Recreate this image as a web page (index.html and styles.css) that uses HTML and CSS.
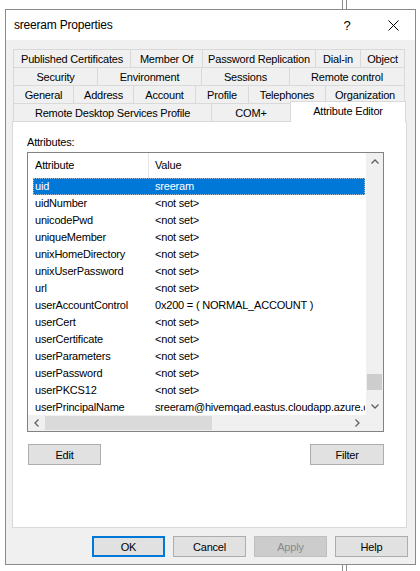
FILE: index.html
```html
<!DOCTYPE html>
<html>
<head>
<meta charset="utf-8">
<title>sreeram Properties</title>
<link rel="stylesheet" href="styles.css">
</head>
<body>
<div class="bgline bgline-top"></div>
<div class="window">
  <div class="titlebar">
    <span class="title">sreeram Properties</span>
    <span class="helpq">?</span>
    <svg class="close" width="11" height="11" viewBox="0 0 11 11"><path d="M0.5 0.5 L10.5 10.5 M10.5 0.5 L0.5 10.5" stroke="#000" stroke-width="1" fill="none"/></svg>
  </div>
  <div class="body">
    <div class="tabs">
      <div class="tabrow r1">
        <div class="tab">Published Certificates</div>
        <div class="tab">Member Of</div>
        <div class="tab">Password Replication</div>
        <div class="tab">Dial-in</div>
        <div class="tab last">Object</div>
      </div>
      <div class="tabrow r2">
        <div class="tab">Security</div>
        <div class="tab">Environment</div>
        <div class="tab">Sessions</div>
        <div class="tab last">Remote control</div>
      </div>
      <div class="tabrow r3">
        <div class="tab">General</div>
        <div class="tab">Address</div>
        <div class="tab">Account</div>
        <div class="tab">Profile</div>
        <div class="tab">Telephones</div>
        <div class="tab last">Organization</div>
      </div>
      <div class="tabrow r4">
        <div class="tab">Remote Desktop Services Profile</div>
        <div class="tab">COM+</div>
        <div class="tab last selected">Attribute Editor</div>
      </div>
    </div>
    <div class="panel">
      <div class="label">Attributes:</div>
      <div class="listbox">
        <div class="listarea">
          <div class="lheader">
            <div class="hcell">Attribute</div>
            <div class="hcell hvalue">Value</div>
          </div>
          <div class="lrow sel"><span class="c1">uid</span><span class="c2">sreeram</span></div>
          <div class="lrow"><span class="c1">uidNumber</span><span class="c2">&lt;not set&gt;</span></div>
          <div class="lrow"><span class="c1">unicodePwd</span><span class="c2">&lt;not set&gt;</span></div>
          <div class="lrow"><span class="c1">uniqueMember</span><span class="c2">&lt;not set&gt;</span></div>
          <div class="lrow"><span class="c1">unixHomeDirectory</span><span class="c2">&lt;not set&gt;</span></div>
          <div class="lrow"><span class="c1">unixUserPassword</span><span class="c2">&lt;not set&gt;</span></div>
          <div class="lrow"><span class="c1">url</span><span class="c2">&lt;not set&gt;</span></div>
          <div class="lrow"><span class="c1">userAccountControl</span><span class="c2">0x200 = ( NORMAL_ACCOUNT )</span></div>
          <div class="lrow"><span class="c1">userCert</span><span class="c2">&lt;not set&gt;</span></div>
          <div class="lrow"><span class="c1">userCertificate</span><span class="c2">&lt;not set&gt;</span></div>
          <div class="lrow"><span class="c1">userParameters</span><span class="c2">&lt;not set&gt;</span></div>
          <div class="lrow"><span class="c1">userPassword</span><span class="c2">&lt;not set&gt;</span></div>
          <div class="lrow"><span class="c1">userPKCS12</span><span class="c2">&lt;not set&gt;</span></div>
          <div class="lrow"><span class="c1">userPrincipalName</span><span class="c2">sreeram@hivemqad.eastus.cloudapp.azure.com</span></div>
        </div>
        <div class="vscroll">
          <div class="arrow"><svg width="8" height="5" viewBox="0 0 8 5"><path d="M0.5 4.5 L4 1 L7.5 4.5" stroke="#606060" stroke-width="1.3" fill="none"/></svg></div>
          <div class="vtrack"><div class="vthumb" style="margin-top:204px"></div></div>
          <div class="arrow"><svg width="8" height="5" viewBox="0 0 8 5"><path d="M0.5 0.5 L4 4 L7.5 0.5" stroke="#606060" stroke-width="1.3" fill="none"/></svg></div>
        </div>
        <div class="hscroll">
          <div class="harrow"><svg width="5" height="8" viewBox="0 0 5 8"><path d="M4.5 0.5 L1 4 L4.5 7.5" stroke="#606060" stroke-width="1.3" fill="none"/></svg></div>
          <div class="htrack"><div class="hthumb" style="width:167px"></div></div>
          <div class="harrow"><svg width="5" height="8" viewBox="0 0 5 8"><path d="M0.5 0.5 L4 4 L0.5 7.5" stroke="#606060" stroke-width="1.3" fill="none"/></svg></div>
        </div>
        <div class="corner"></div>
      </div>
      <div class="panelbtns">
        <div class="btn btn-edit">Edit</div>
        <div class="btn btn-filter">Filter</div>
      </div>
    </div>
    <div class="dlgbtns">
      <div class="btn default">OK</div>
      <div class="btn">Cancel</div>
      <div class="btn disabled">Apply</div>
      <div class="btn">Help</div>
    </div>
  </div>
</div>
<div class="bgline bgline-bottom"></div>
</body>
</html>
```
FILE: styles.css
```css
* { box-sizing: border-box; }
html, body { margin: 0; padding: 0; background: #ffffff; }
body {
  font-family: "Liberation Sans", Arial, sans-serif;
  font-size: 11px;
  letter-spacing: -0.2px;
  color: #000;
  width: 420px;
  height: 571px;
  overflow: hidden;
}
.bgline {
  margin-left: 342px;
  width: 5px;
  border-left: 1px solid #8c8c8c;
  border-right: 1px solid #8c8c8c;
  background: #fff;
}
.bgline-top { height: 9px; }
.bgline-bottom { height: 7px; }

.window {
  margin-left: 5px;
  width: 411px;
  height: 556px;
  border: 1px solid #8a8a8a;
  background: #f0f0f0;
  display: flex;
  flex-direction: column;
}
.titlebar {
  height: 30px;
  background: #fff;
  display: flex;
  align-items: center;
  padding-left: 8px;
  padding-right: 16px;
}
.title { flex: 1; font-size: 12px; letter-spacing: -0.2px; }
.helpq { font-size: 13px; width: 14px; text-align: center; margin-right: 34px; letter-spacing: 0; }
.close { display: block; }

.body {
  flex: 1;
  padding: 9px 8px 0 6px;
  display: flex;
  flex-direction: column;
}
.tabs { margin: 0 1px; }
.tabrow {
  display: grid;
  height: 18px;
}
.r1 { grid-template-columns: 117px 72px 113px 45px 45px; }
.r2 { grid-template-columns: 84px 104px 88px 116px; }
.r3 { grid-template-columns: 60px 60px 62px 53px 77px 80px; }
.r4 { grid-template-columns: 198px 79px 115px; }
.tab {
  border-top: 1px solid #d9d9d9;
  border-left: 1px solid #d9d9d9;
  background: #f0f0f0;
  display: flex;
  align-items: center;
  justify-content: center;
  white-space: nowrap;
  padding-top: 1px;
}
.tab.last { border-right: 1px solid #d9d9d9; }
.tab.selected {
  background: #fff;
  margin-top: -2px;
  margin-bottom: -1px;
  margin-right: -1px;
  padding-bottom: 4px;
  position: relative;
  z-index: 1;
}

.panel {
  height: 407px;
  background: #fff;
  border: 1px solid #d9d9d9;
  padding: 13px 0 0 14px;
}
.label { height: 14px; line-height: 14px; margin-bottom: 3px; }
.listbox {
  width: 357px;
  height: 280px;
  border: 1px solid #828282;
  display: grid;
  grid-template-columns: 338px 17px;
  grid-template-rows: 262px 16px;
}
.listarea { overflow: hidden; background: #fff; }
.lheader {
  height: 25px;
  display: grid;
  grid-template-columns: 120px 1fr;
}
.hcell { padding-left: 7px; line-height: 25px; }
.hvalue { border-left: 1px solid #e5e5e5; padding-left: 6px; }
.lrow {
  height: 17px;
  line-height: 17px;
  margin: 0 1px 0 5px;
  display: grid;
  grid-template-columns: 122px 1fr;
  white-space: nowrap;
  overflow: hidden;
}
.c1 { padding-left: 2px; }
.lrow.sel {
  background: #0078d7;
  color: #fff;
  outline: 1px dotted #9fb8cf;
  outline-offset: -1px;
}
.vscroll {
  background: #f0f0f0;
  display: flex;
  flex-direction: column;
}
.arrow {
  height: 17px;
  display: flex;
  align-items: center;
  justify-content: center;
}
.arrow svg, .harrow svg { display: block; }
.vtrack { flex: 1; }
.vthumb { width: 15px; height: 16px; margin-left: 1px; background: #cdcdcd; }
.hscroll {
  background: #f0f0f0;
  display: flex;
}
.harrow {
  width: 17px;
  display: flex;
  align-items: center;
  justify-content: center;
}
.htrack { flex: 1; display: flex; align-items: center; }
.hthumb { height: 14px; background: #dadada; }
.corner { background: #f0f0f0; }

.btn {
  width: 73px;
  height: 21px;
  background: #e1e1e1;
  border: 1px solid #adadad;
  display: flex;
  align-items: center;
  justify-content: center;
}
.panelbtns {
  width: 357px;
  margin-top: 12px;
  display: flex;
  justify-content: space-between;
}
.btn-edit { margin-left: 1px; }
.btn-filter { width: 74px; }
.dlgbtns {
  margin-top: 8px;
  margin-right: -1px;
  display: flex;
  justify-content: flex-end;
  gap: 8px;
}
.btn.default { border: 2px solid #0078d7; }
.btn.disabled { background: #cccccc; border-color: #bfbfbf; color: #8a8a8a; }
```
